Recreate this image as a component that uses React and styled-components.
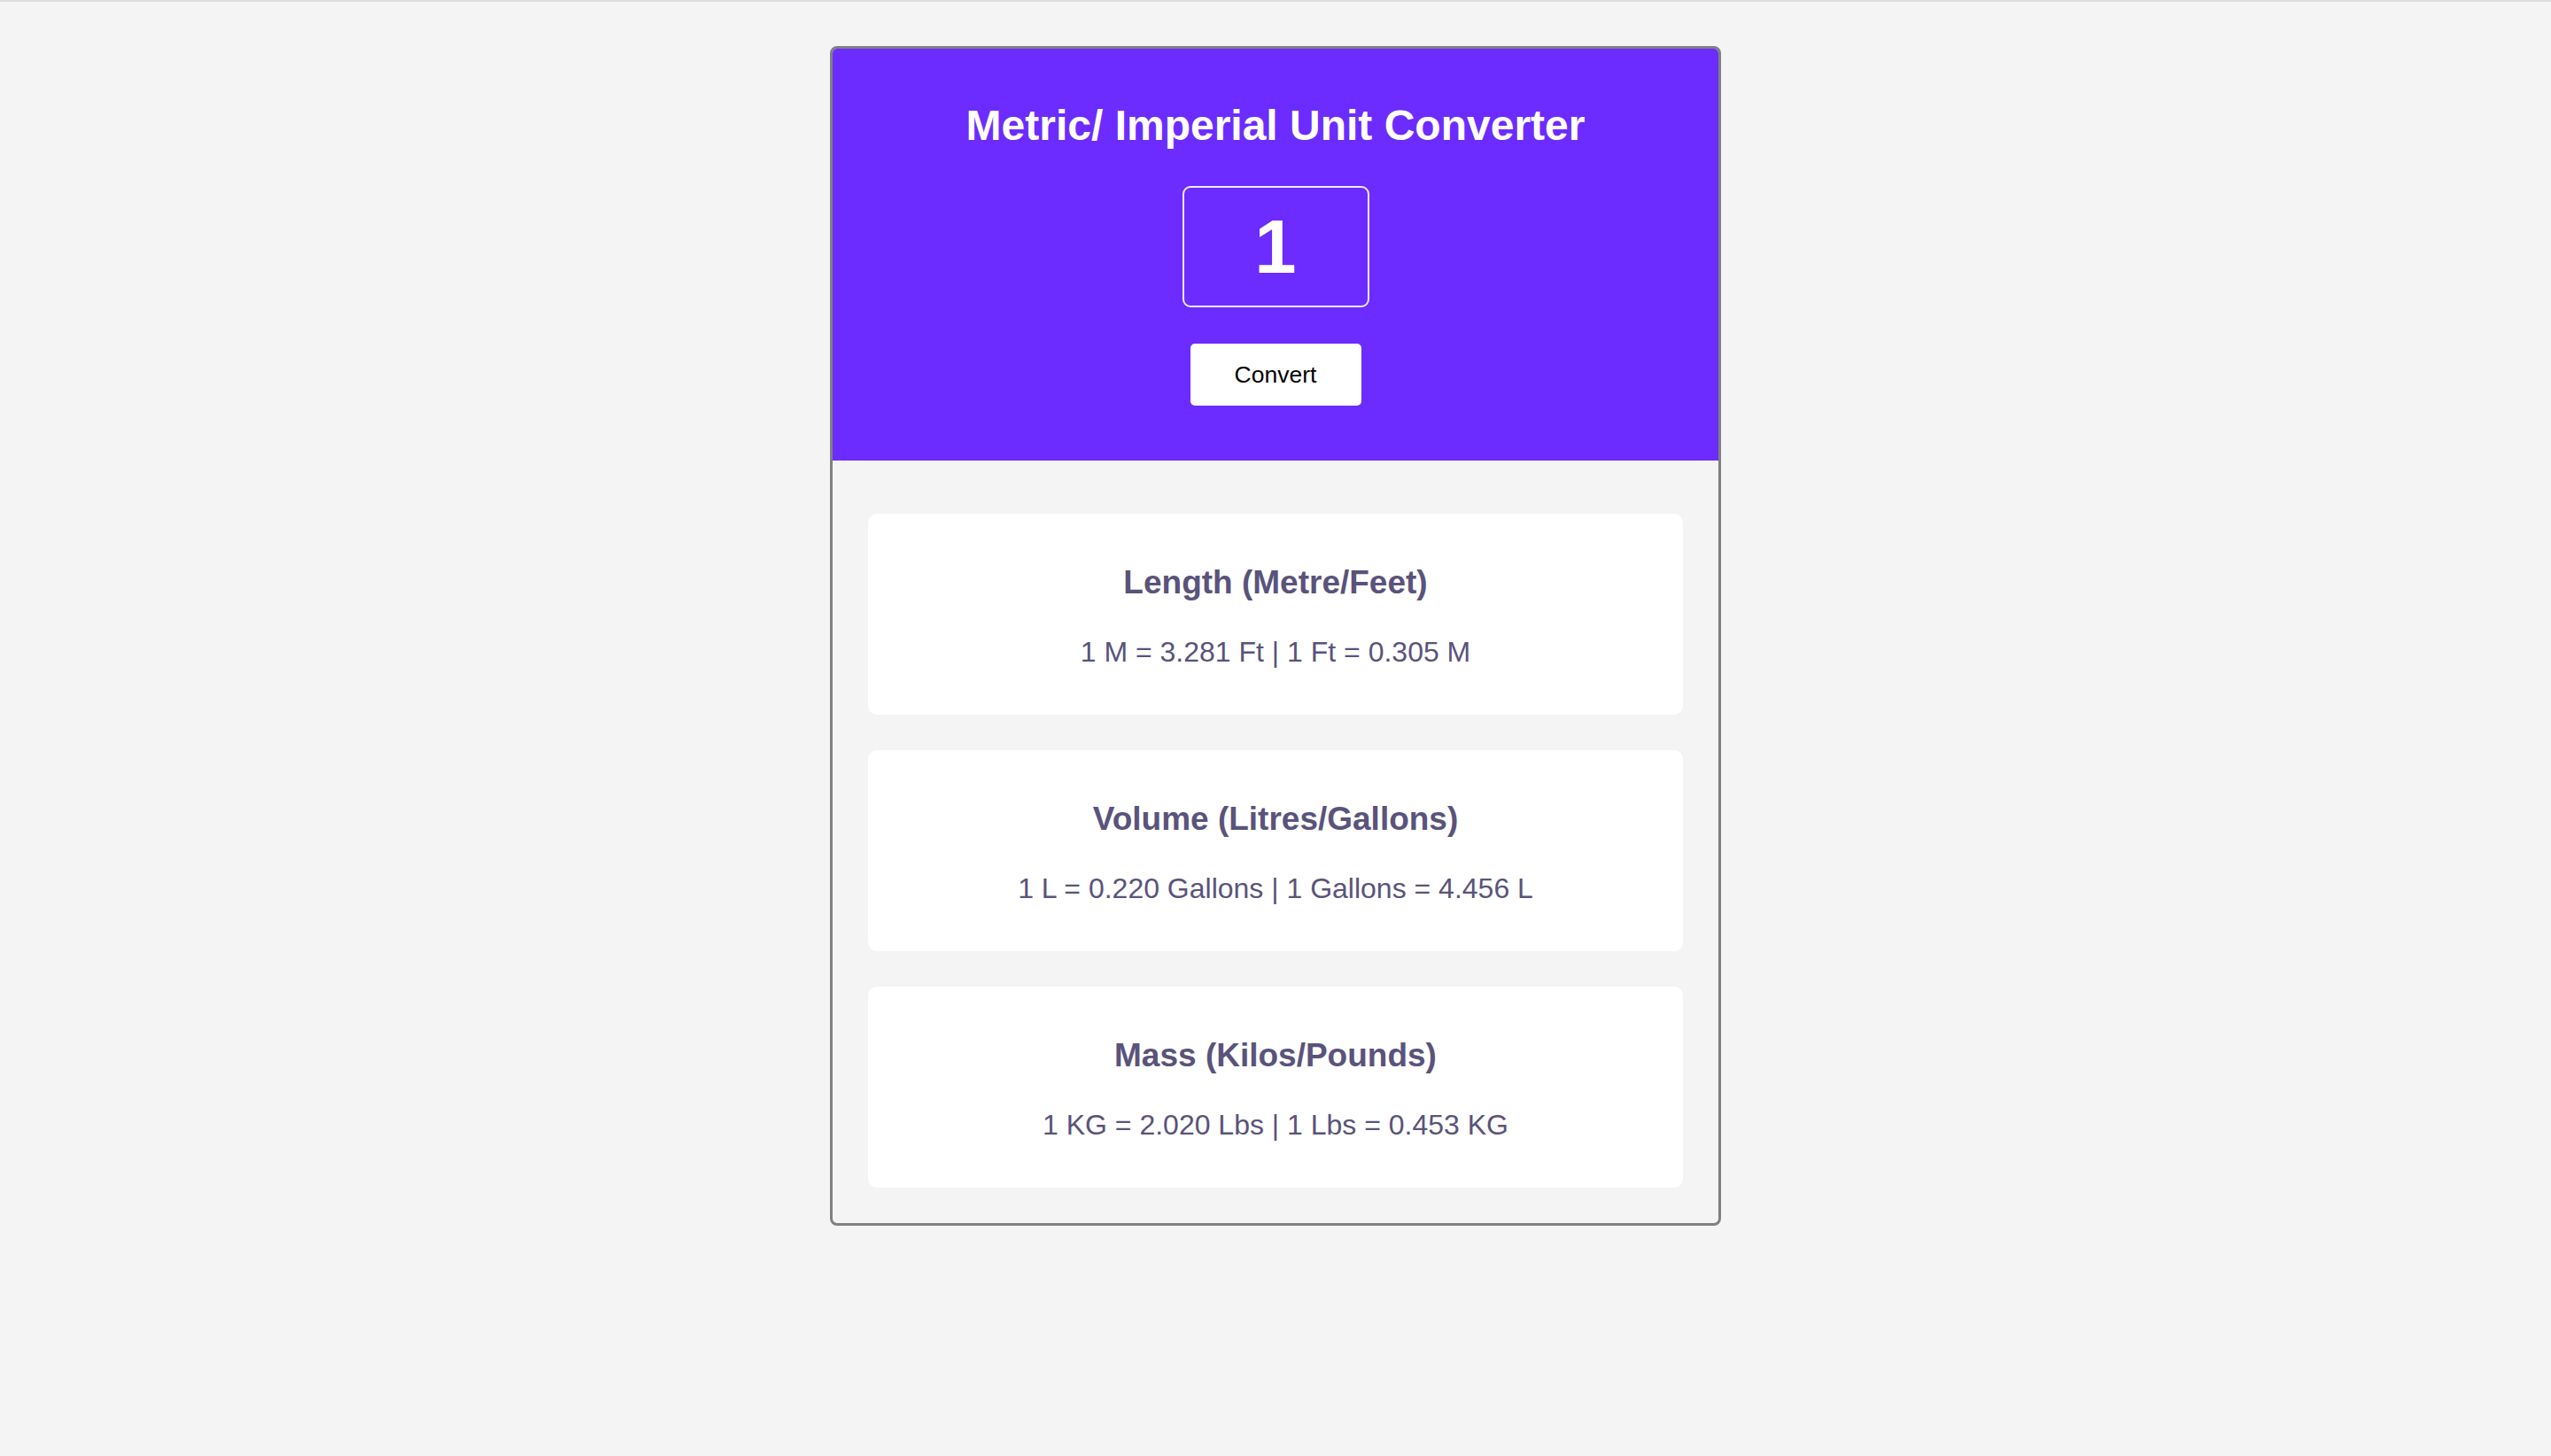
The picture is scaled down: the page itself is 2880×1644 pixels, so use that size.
import React from "react";
import styled, { createGlobalStyle } from "styled-components";

const GlobalStyle = createGlobalStyle`
    body {
        margin: 0;
        background: #f4f4f4;
        border-top: 2px solid #dddddd;
        font-family: "Liberation Sans", Arial, sans-serif;
    }
`;

const conversions = [
    { title: "Length (Metre/Feet)", text: "1 M = 3.281 Ft | 1 Ft = 0.305 M" },
    { title: "Volume (Litres/Gallons)", text: "1 L = 0.220 Gallons | 1 Gallons = 4.456 L" },
    { title: "Mass (Kilos/Pounds)", text: "1 KG = 2.020 Lbs | 1 Lbs = 0.453 KG" },
];

function App() {
    return (
        <Page>
            <GlobalStyle />
            <Converter>
                <Header>
                    <Title>Metric/ Imperial Unit Converter</Title>
                    <NumberInput type="text" defaultValue="1" />
                    <ConvertButton>Convert</ConvertButton>
                </Header>
                <Results>
                    {conversions.map((c) => (
                        <Card key={c.title}>
                            <CardTitle>{c.title}</CardTitle>
                            <CardText>{c.text}</CardText>
                        </Card>
                    ))}
                </Results>
            </Converter>
        </Page>
    );
}

const Page = styled.div`
    display: flex;
    justify-content: center;
    padding-top: 50px;
    padding-bottom: 60px;
`;
const Converter = styled.div`
    width: 1000px;
    border: 3px solid #808080;
    border-radius: 8px;
    overflow: hidden;
    background: #f4f4f4;
`;
const Header = styled.div`
    display: flex;
    flex-direction: column;
    align-items: center;
    background: #6c2cff;
    padding: 59px 0 62px;
`;
const Title = styled.h1`
    margin: 0;
    font-size: 48px;
    font-weight: bold;
    color: #ffffff;
`;
const NumberInput = styled.input`
    box-sizing: border-box;
    width: 211px;
    height: 137px;
    margin-top: 41px;
    border: 2px solid #efeaff;
    border-radius: 9px;
    background: transparent;
    color: #ffffff;
    font-family: "Liberation Sans", Arial, sans-serif;
    font-size: 85px;
    font-weight: bold;
    text-align: center;
    outline: none;
    padding: 0;
`;
const ConvertButton = styled.button`
    width: 193px;
    height: 70px;
    margin-top: 41px;
    border: none;
    border-radius: 5px;
    background: #ffffff;
    color: #000000;
    font-family: "Liberation Sans", Arial, sans-serif;
    font-size: 26.5px;
    cursor: pointer;
`;
const Results = styled.div`
    display: flex;
    flex-direction: column;
    gap: 40px;
    padding: 60px 40px 40px;
`;
const Card = styled.div`
    background: #ffffff;
    border-radius: 10px;
    padding: 57px 0 52px;
    text-align: center;
    color: #5a537b;
`;
const CardTitle = styled.h2`
    margin: 0 0 39px;
    font-size: 37px;
    font-weight: bold;
`;
const CardText = styled.p`
    margin: 0;
    font-size: 32px;
`;

export default App;
